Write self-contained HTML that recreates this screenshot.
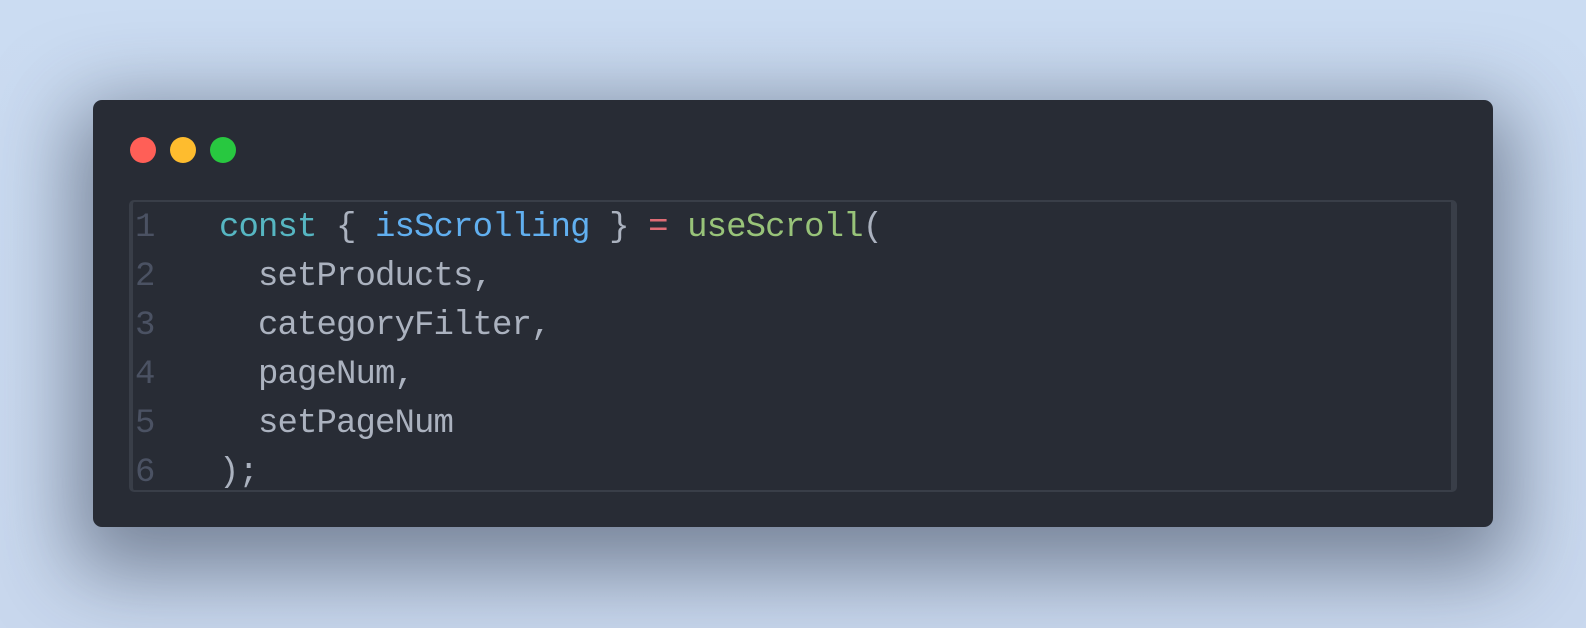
<!DOCTYPE html>
<html><head><style>
html,body{margin:0;padding:0;}
body{width:1586px;height:628px;overflow:hidden;background:linear-gradient(180deg,#cbdcf2 0%,#c9d8ee 100%);position:relative;font-family:"Liberation Mono",monospace;}
.win{position:absolute;left:93px;top:100px;width:1400px;height:427px;background:#282c35;border-radius:9px;box-shadow:0 25px 80px 20px rgba(40,50,70,0.5);}
.dot{position:absolute;top:37px;width:26px;height:26px;border-radius:50%;}
.code{position:absolute;left:36px;top:100px;width:1318px;height:288px;border:2px solid #393e48;border-left-width:4px;border-right-width:6px;border-radius:5px;}
.ln{position:absolute;left:135px;font-size:34px;letter-spacing:-0.9px;color:#4b5263;line-height:49px;}
.l{position:absolute;font-size:34px;letter-spacing:-0.9px;line-height:49px;color:#abb2bf;white-space:pre;}
</style></head><body>
<div class="win">
<div class="dot" style="left:37px;background:#ff5f57"></div>
<div class="dot" style="left:77px;background:#febc2e"></div>
<div class="dot" style="left:117px;background:#28c840"></div>
<div class="code"></div>
</div>
<div class="ln" style="top:204px">1<br>2<br>3<br>4<br>5<br>6</div>
<div class="l" style="left:219px;top:204px"><span style="color:#56b6c2">const</span> { <span style="color:#61afef">isScrolling</span> } <span style="color:#e06c75">=</span> <span style="color:#98c379">useScroll</span>(</div>
<div class="l" style="left:219px;top:253px">  setProducts,</div>
<div class="l" style="left:219px;top:302px">  categoryFilter,</div>
<div class="l" style="left:219px;top:351px">  pageNum,</div>
<div class="l" style="left:219px;top:400px">  setPageNum</div>
<div class="l" style="left:219px;top:449px">);</div>
</body></html>
